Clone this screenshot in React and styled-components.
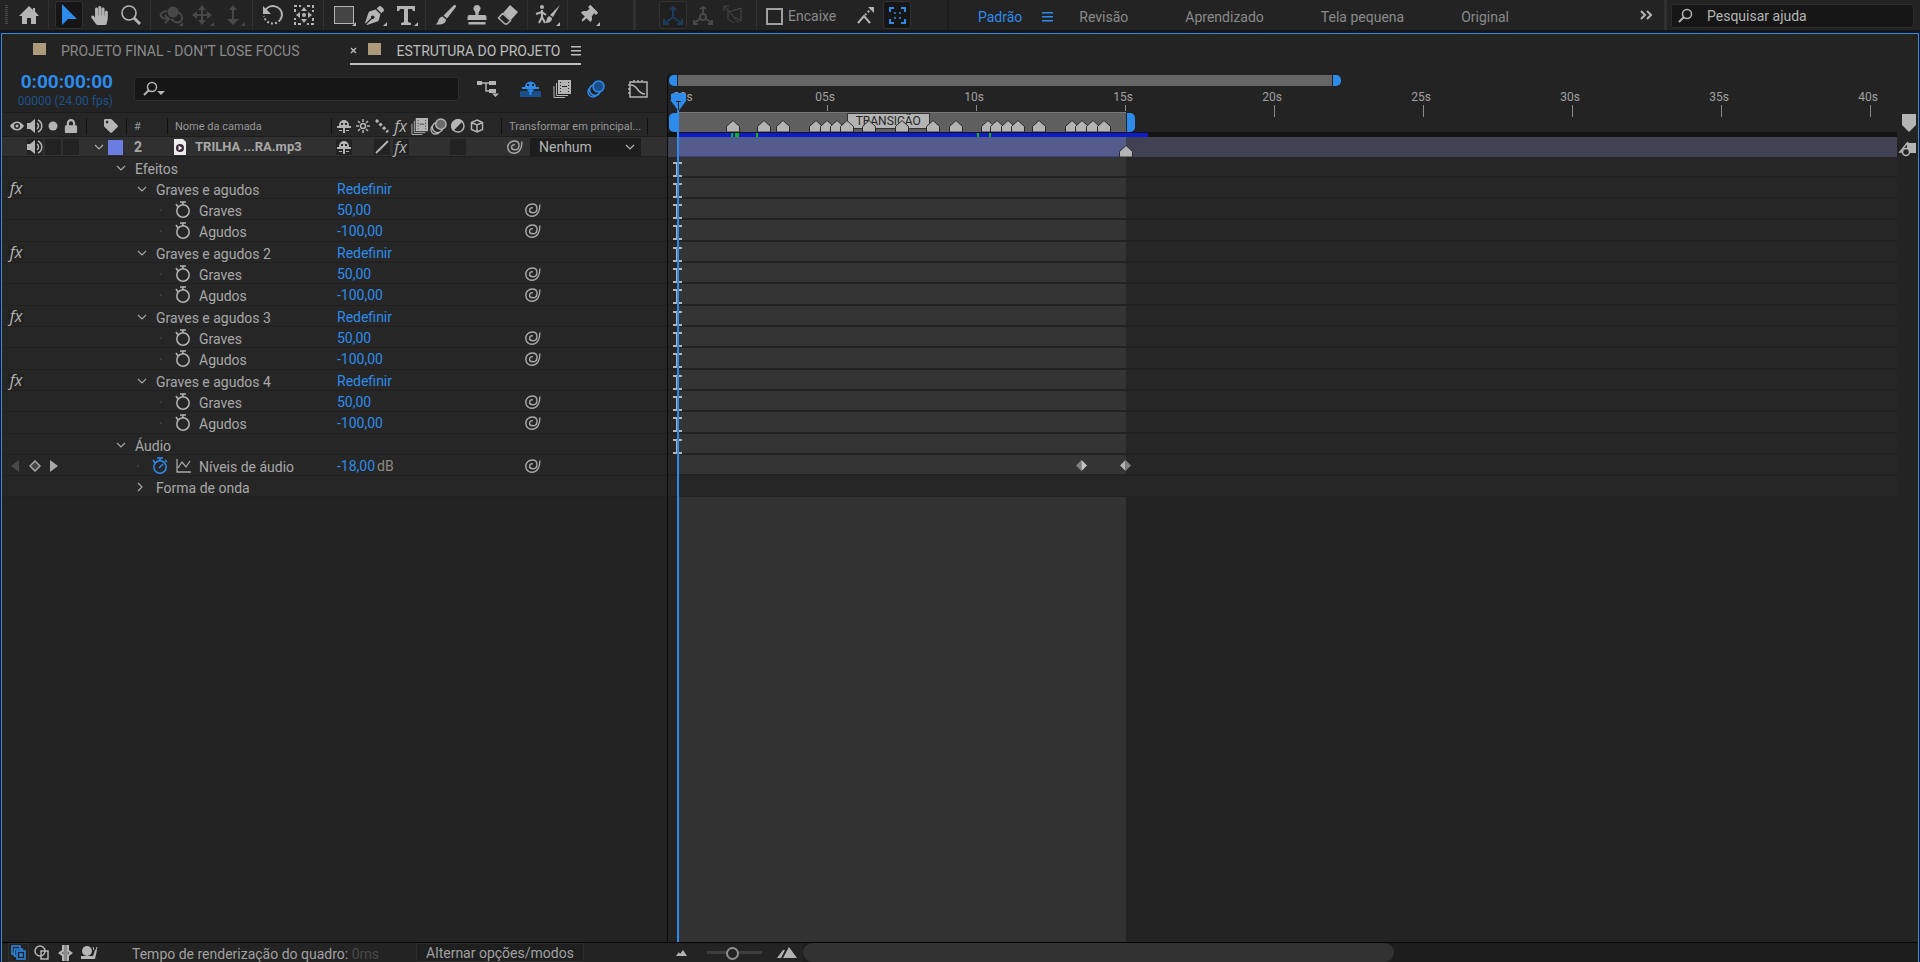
import React from 'react';
import styled, { createGlobalStyle, css } from 'styled-components';
import { FaHandPaper, FaPenNib, FaTag, FaLock, FaThumbtack } from 'react-icons/fa';

const BLUE = '#2d8ceb';
const ICON = '#b4b4b4';
const DIM = '#484848';

/* ---------- time scale ---------- */
const VIEW_SECONDS = 40.9;
const CLIP_END = 15.03;
const at = (t) => `${(t / VIEW_SECONDS) * 100}%`;

const Global = createGlobalStyle`
  * { box-sizing: border-box; }
  body {
    margin: 0;
    background: #161616;
    color: #a8a8a8;
    font-family: Roboto, "Noto Sans", sans-serif;
    font-size: 14px;
    line-height: 20px;
  }
  button, input, select { font: inherit; color: inherit; }
  button { background: none; border: 0; padding: 0; cursor: pointer; }
  svg { display: block; flex: none; }
`;

const Page = styled.div`
  min-height: 100vh;
  display: flex;
  flex-direction: column;
  overflow: hidden;
`;

/* ---------- toolbar ---------- */
const Toolbar = styled.header`
  display: flex;
  align-items: stretch;
  height: 30px;
  background: #232323;
`;
const Grip = styled.div`
  width: 3px;
  margin: 5px 1px 5px 5px;
  background: repeating-linear-gradient(#4a4a4a 0 1px, transparent 1px 2px);
`;
const ToolGroup = styled.div`
  display: flex;
  align-items: center;
  padding: 0 4px;
  border-right: ${(p) => (p.$thick ? '3px' : '1px')} solid #303030;
  min-width: ${(p) => p.$min || 0}px;
`;
const AxisGroup = styled.div`
  display: flex;
  align-items: center;
  width: 121px;
  padding-left: 21px;
  border-right: 1px solid #303030;
`;
const Tool = styled.button`
  position: relative;
  display: grid;
  place-items: center;
  width: ${(p) => p.$w || 31}px;
  height: 28px;
  flex: none;
  color: ${(p) => (p.$dim ? DIM : p.$blue ? BLUE : ICON)};
  ${(p) => p.$active && css`
    background: #161616;
    border: 1px solid #323232;
    border-radius: 3px;
    width: 28px;
    margin: 0 1px 0 2px;
  `}
  ${(p) => p.$off && css`
    background: #202020;
    color: #1b3a5c;
  `}
  ${(p) => p.$more && css`
    &::after {
      content: '';
      position: absolute;
      right: 3px;
      bottom: 3px;
      border: 2px solid transparent;
      border-right-color: currentColor;
      border-bottom-color: currentColor;
    }
  `}
`;
const SnapGroup = styled.div`
  display: flex;
  align-items: center;
  width: 192px;
  flex: none;
  padding-left: 9px;
  border-right: 2px solid #1c1c1c;
`;
const Snap = styled.label`
  display: flex;
  align-items: center;
  gap: 5px;
  margin-right: 14px;
  padding-top: 2px;
  color: #8a8a8a;
  input {
    appearance: none;
    width: 17px;
    height: 17px;
    margin: 0;
    border: 2px solid #a0a0a0;
  }
`;
const Workspaces = styled.nav`
  display: flex;
  flex: 1;
  align-items: center;
  gap: 57px;
  padding: 3px 0 0 29px;
  white-space: nowrap;
`;
const Workspace = styled.a`
  display: flex;
  align-items: center;
  gap: 20px;
  margin-right: ${(p) => (p.$active ? '-31px' : 0)};
  color: ${(p) => (p.$active ? BLUE : '#8a8a8a')};
  text-decoration: none;
`;
const MoreButton = styled.button`
  display: grid;
  place-items: center;
  width: 38px;
  color: ${ICON};
  border-right: 3px solid #303030;
`;
const HelpSearch = styled.label`
  display: flex;
  align-items: center;
  gap: 13px;
  width: 243px;
  margin: 4px 6px 2px 4px;
  padding-left: 6px;
  background: #161616;
  border: 1px solid #2c2c2c;
  border-radius: 3px;
  color: ${ICON};
  input {
    width: 190px;
    padding: 0;
    border: 0;
    background: none;
    outline: 0;
    &::placeholder { color: #b4b4b4; opacity: 1; }
  }
`;

/* ---------- panel ---------- */
const Panel = styled.main`
  display: flex;
  flex-direction: column;
  flex: 1;
  margin: 3px 1px 0;
  border: 1px solid ${BLUE};
  border-bottom: 0;
  background: #232323;
`;
const Tabs = styled.div`
  display: flex;
  align-items: flex-start;
  height: 32px;
  padding-left: 31px;
`;
const Tab = styled.button`
  display: flex;
  align-items: center;
  height: 31px;
  padding-top: 4px;
  margin-right: 50px;
  color: ${(p) => (p.$active ? '#bdbdbd' : '#8a8a8a')};
  border-bottom: 2px solid ${(p) => (p.$active ? '#bdbdbd' : 'transparent')};
`;
const Swatch = styled.span`
  width: 13px;
  height: 12px;
  margin: 0 ${(p) => (p.$wide ? '16px' : '15px')} 4px ${(p) => (p.$wide ? '11px' : '0')};
  background: #ad9a7a;
`;
const TabMenu = styled.span`
  margin-left: 10px;
`;
const Body = styled.div`
  display: flex;
  flex: 1;
`;
const Layers = styled.section`
  width: 665px;
  flex: none;
`;
const Controls = styled.div`
  display: flex;
  align-items: center;
  height: 46px;
`;
const Time = styled.div`
  width: 118px;
  padding: 5px 7px 0 0;
  text-align: right;
  line-height: 19px;
  color: #1c528a;
  font-size: 12px;
  strong {
    display: block;
    font-size: 19px;
    line-height: 20px;
    color: ${BLUE};
  }
`;
const LayerSearch = styled.label`
  display: flex;
  align-items: center;
  width: 325px;
  height: 24px;
  margin-left: 14px;
  padding-left: 8px;
  background: #161616;
  border: 1px solid #2e2e2e;
  border-radius: 3px;
  color: ${ICON};
  input { flex: 1; min-width: 0; border: 0; background: none; outline: 0; }
`;
const CompButtons = styled.div`
  display: flex;
  align-items: center;
  margin-left: 18px;
`;
const CompButton = styled.button`
  margin-left: ${(p) => p.$gap || 0}px;
  color: ${(p) => (p.$blue ? BLUE : ICON)};
`;

const layerColumns = css`
  display: grid;
  grid-template-columns: 85px 40px 41px 164px 170px 146px 1fr;
`;
const Head = styled.div`
  ${layerColumns}
  height: 25px;
  padding: 5px 0 4px;
  border-top: 1px solid #1c1c1c;
  border-bottom: 1px solid #1c1c1c;
  background: #262626;
  color: #969696;
  font-size: 11px;
  line-height: 15px;
`;
const LayerRow = styled.div`
  ${layerColumns}
  height: 20px;
  background: #303030;
  border-bottom: 1px solid #1f1f1f;
  font-weight: 700;
`;
const Cell = styled.div`
  display: flex;
  align-items: center;
  justify-content: ${(p) => (p.$center ? 'center' : 'flex-start')};
  padding-left: ${(p) => p.$pad || 0}px;
  border-right: ${(p) => (p.$line ? '1px solid #101010' : '1px solid transparent')};
  white-space: nowrap;
`;
const Slot = styled.span`
  display: grid;
  place-items: center;
  width: ${(p) => p.$w || 18}px;
  height: 16px;
  color: ${ICON};
  background: linear-gradient(#222, #222) center / 16px 16px no-repeat;
  ${(p) => p.$bare && css`background: none;`}
`;
const ColorLabel = styled.span`
  width: 15px;
  height: 15px;
  margin-left: 4px;
  background: #6a7ee0;
`;
const LayerName = styled.span`
  margin-left: 9px;
  font-size: 13px;
`;
const Parent = styled.label`
  display: flex;
  align-items: center;
  position: relative;
  margin-left: 7px;
  font-weight: 400;
  color: #b4b4b4;
  select {
    appearance: none;
    width: 111px;
    height: 18px;
    padding: 0 9px;
    border: 0;
    background: #1d1d1d;
    line-height: 18px;
  }
  svg { position: absolute; right: 6px; }
`;
const PropRow = styled.div`
  display: grid;
  grid-template-columns: 85px 245px 170px 146px 1fr;
  height: ${(p) => p.$h}px;
  background: #262626;
  border-bottom: 1px solid #202020;
  line-height: 18px;
`;
const PropName = styled.div`
  display: flex;
  align-items: center;
  gap: ${(p) => p.$gap}px;
  padding-left: ${(p) => p.$pad}px;
  white-space: nowrap;
`;
const NameText = styled.span`
  padding-top: 3px;
`;
const Dot = styled.i`
  width: 2px;
  height: 2px;
  margin-right: 5px;
  background: #3c3c3c;
`;
const Watch = styled.button`
  color: ${(p) => (p.$on ? BLUE : ICON)};
`;
const Value = styled.div`
  display: flex;
  align-items: center;
  gap: 2px;
  padding-left: 5px;
  color: #8f8a80;
  button { color: ${BLUE}; }
`;
const KeySlot = styled.div`
  display: flex;
  align-items: center;
  gap: 9px;
  padding-left: ${(p) => (p.$keys ? '9px' : '6px')};
`;

/* ---------- timeline ---------- */
const Timeline = styled.section`
  position: relative;
  flex: 1;
  min-width: 0;
  display: flex;
  flex-direction: column;
  margin-top: 7px;
  overflow: hidden;
  border-left: 1px solid #0a0a0a;
  border-radius: 6px 6px 0 0;
`;
const Track = styled.div`
  height: ${(p) => p.$h}px;
  padding: ${(p) => p.$top || 0}px 0 0 10px;
  background: ${(p) => p.$bg || 'transparent'};
`;
const Scale = styled.div`
  position: relative;
  height: 100%;
`;
const rounded = css`
  &::before, &::after {
    content: '';
    position: absolute;
    top: 0;
    bottom: 0;
    width: 8px;
    background: ${BLUE};
  }
  &::before { left: -9px; border-radius: 5px 0 0 5px; }
  &::after { right: -9px; border-radius: 0 5px 5px 0; }
`;
const NavBar = styled.div`
  position: relative;
  height: 11px;
  background: #666;
  ${rounded}
`;
const WorkBar = styled.div`
  position: relative;
  height: 20px;
  background: #5f5f5f;
  border-top: 1px solid #787878;
  ${rounded}
`;
const Tick = styled.div`
  position: absolute;
  top: 0;
  width: 60px;
  margin-left: -32px;
  text-align: center;
  font-size: 12px;
  line-height: 20px;
  color: #a0a0a0;
  z-index: 1;
  &::after {
    content: '';
    position: absolute;
    top: 18px;
    left: 32px;
    width: 1px;
    height: ${(p) => (p.$short ? '6px' : '12px')};
    background: #8a8a8a;
  }
  &:first-child {
    margin-left: -8px;
    text-align: left;
    &::after { display: none; }
  }
`;
const MarkerBox = styled.span`
  position: absolute;
  bottom: 0;
  margin-left: -7px;
`;
const MarkerLabel = styled.span`
  position: absolute;
  top: 1px;
  padding: 0 8px;
  background: #b4b4b4;
  border: 1px solid #333;
  color: #262626;
  font-size: 12px;
  line-height: 14px;
`;
const Cached = styled.span`
  position: absolute;
  top: 1px;
  height: 4px;
  min-width: 2px;
  background: ${(p) => (p.$green ? '#12b41e' : '#0d1cc8')};
`;
const Clip = styled.div`
  position: absolute;
  inset: 0 auto 0 0;
  background: #535c8c;
  border-bottom: 1px solid #3a4480;
`;
const Lane = styled.div`
  height: ${(p) => p.$h}px;
  padding-left: 10px;
  background: #262626;
  border-bottom: ${(p) => (p.$empty ? 1 : 2)}px solid #212121;
`;
const LaneFill = styled.div`
  height: 100%;
  background: ${(p) => (p.$empty ? 'transparent' : '#343434')};
`;
const Beam = styled.span`
  position: absolute;
  left: -5px;
  top: 5px;
  color: ${ICON};
`;
const Rest = styled.div`
  flex: 1;
  padding-left: 10px;
  display: flex;
`;
const RestFill = styled.div`
  background: #323232;
`;
const Key = styled.span`
  position: absolute;
  top: 5px;
  margin-left: -6px;
`;
const Playhead = styled.div`
  position: absolute;
  top: 20px;
  bottom: 0;
  left: 3px;
  width: 15px;
  pointer-events: none;
  z-index: 2;
  &::after {
    content: '';
    position: absolute;
    top: 17px;
    bottom: 0;
    left: 6px;
    width: 2px;
    background: ${BLUE};
  }
`;
const Gutter = styled.aside`
  width: 21px;
  flex: none;
  padding-top: 48px;
  color: ${ICON};
  svg { margin: 0 auto 9px 5px; }
  svg + svg { margin-left: 1px; }
`;

/* ---------- footer ---------- */
const Footer = styled.footer`
  display: flex;
  height: 20px;
  border-top: 1px solid #050505;
  color: #a0a0a0;
`;
const FootLeft = styled.div`
  display: flex;
  align-items: center;
  width: 666px;
  flex: none;
  padding-left: 6px;
  white-space: nowrap;
`;
const FootIcon = styled.button`
  display: grid;
  place-items: center;
  width: ${(p) => (p.$active ? 21 : 24)}px;
  height: 19px;
  color: ${(p) => (p.$active ? BLUE : ICON)};
  border: ${(p) => (p.$active ? '1px solid #303030' : 0)};
`;
const RenderTime = styled.span`
  width: 284px;
  margin-left: 31px;
  padding-top: 2px;
  em { font-style: normal; color: #4a4a4a; }
`;
const ModeButton = styled.button`
  width: 168px;
  height: 19px;
  border: 1px solid #2c2c2c;
  background: #1f1f1f;
  line-height: 19px;
`;
const Zoomer = styled.label`
  display: flex;
  align-items: center;
  gap: 20px;
  width: 135px;
  flex: none;
  padding-left: 8px;
  color: ${ICON};
  input {
    appearance: none;
    width: 55px;
    height: 16px;
    margin: 0;
    background: linear-gradient(#3e3e3e, #3e3e3e) center / 100% 3px no-repeat;
    &::-webkit-slider-thumb {
      appearance: none;
      width: 13px;
      height: 13px;
      margin-top: 1px;
      border: 2px solid #8f8f8f;
      border-radius: 50%;
      background: #232323;
    }
  }
  svg:last-child { margin-left: -5px; }
`;
const Scroll = styled.div`
  flex: 1;
  background: #1d1d1d;
`;
const Thumb = styled.div`
  width: 53%;
  height: 19px;
  border-radius: 10px;
  background: #323232;
`;

/* ---------- icons ---------- */
const Svg = ({ w = 16, h = w, box = `0 0 ${w} ${h}`, sw = 0, children }) => (
  <svg width={w} height={h} viewBox={box} fill={sw ? 'none' : 'currentColor'} stroke={sw ? 'currentColor' : 'none'} strokeWidth={sw || undefined} aria-hidden="true">
    {children}
  </svg>
);
const Home = () => <Svg w={22} h={20}><path d="M11 1 1 11h3v8h5v-6h4v6h5v-8h3L17 6.500V3h-2v2z" /></Svg>;
const Arrow = () => <Svg w={18} h={22}><path d="M2 0v21l6-6h9z" /></Svg>;
const Magnifier = () => <Svg w={22} sw={1.600}><circle cx="9" cy="9" r="7" /><path d="m14 14 6 6" strokeWidth="3" /></Svg>;
const Orbit = () => <Svg w={24} h={22}><circle cx="14" cy="8" r="5.500" /><path d="M8 7C1 8 0 12 4 14l5 1m-3-4 4 4-4 4M19 8c5 3 5 8 2 10-3 1-6 0-9-3" fill="none" stroke="currentColor" strokeWidth="2" /></Svg>;
const Move = () => <Svg w={20}><path d="m10 0 4 5h-3v4h4V6l5 4-5 4v-3h-4v4h3l-4 5-4-5h3v-4H5v3l-5-4 5-4v3h4V5H6z" /></Svg>;
const Dolly = () => <Svg w={16} h={20}><path d="m8 0 4 5H9v9h5l-6 6-6-6h5V5H4z" /></Svg>;
const Rotate = () => <Svg w={22} sw={2}><path d="M3 7a9 9 0 0 1 17 4 9 9 0 0 1-2 5" /><path d="M18 16A9 9 0 0 1 2 12" strokeDasharray="2 2" /><path d="M1 2v8h8z" fill="currentColor" stroke="none" /></Svg>;
const Anchor = () => (
  <Svg w={22}>
    <path d="M2 8V2h6M14 2h6v6M20 14v6h-6M8 20H2v-6" fill="none" stroke="currentColor" strokeWidth="2" strokeDasharray="3 2" />
    <circle cx="11" cy="11" r="2" /><path d="m11 3 3 4H8zM11 19l3-4H8zM3 11l4-3v6zM19 11l-4-3v6z" />
  </Svg>
);
const Rect = () => <Svg w={20} h={18}><path d="M0 0h20v18H0z" /><path d="M1 1h18v16H1z" fill="#444" /></Svg>;
const TypeTool = () => <Svg w={18} h={19}><path d="M0 0h18v5h-2l-1-2h-4v13l3 1v2H4v-2l3-1V3H3L2 5H0z" /></Svg>;
const Brush = () => <Svg w={21} h={20}><path d="M20.500 0c.8.8.4 1.800 0 2.500L12 13.500 8.500 10.500 18 1c.8-.8 1.800-1.500 2.500-1zM7.500 11.500l3.500 3c0 4-4 5.500-10.500 5 3.500-1.500 2-7 7-8z" /></Svg>;
const Stamp = () => <Svg w={20} h={20}><path d="M10 0a3.500 3.500 0 0 1 2.500 6c-.8 1-1 2-1 4h6a2 2 0 0 1 2 2v3H.5v-3a2 2 0 0 1 2-2h6c0-2-.2-3-1-4A3.500 3.500 0 0 1 10 0zM1.500 17h17v2.500h-17z" /></Svg>;
const Eraser = () => <Svg w={22} h={20}><path d="M13 0 6 8l8 7 7-8z" /><path d="m5.500 8.500 8 7-3.500 3.500H8L1.500 13z" fill="none" stroke="currentColor" strokeWidth="1.500" strokeLinejoin="round" /></Svg>;
const Roto = () => (
  <Svg w={25} h={20}>
    <circle cx="7" cy="2" r="2" />
    <path d="M7 5v7l-3 6M7 12l3 6M7 7 1 9M7 7l4 3" fill="none" stroke="currentColor" strokeWidth="2" />
    <path d="M25 0 18 12l-3-2zM14 11l3 2c0 4-3 5-7 5 2-1 1-5 4-7z" />
  </Svg>
);
const Pin = styled(FaThumbtack)`transform: rotate(45deg);`;
const Axis = () => <Svg w={22} h={20} sw={2}><path d="M11 12V3M11 12l-8 6M11 12l8 6M8 5l3-3 3 3M2 14v5h5M20 14v5h-5" /></Svg>;
const AxisWorld = () => <Svg w={22} h={20} sw={2}><circle cx="11" cy="12" r="3" /><path d="M11 9V2M8 14l-6 4M14 14l6 4M8 4l3-2 3 2M2 15v4h4M20 15v4h-4" /></Svg>;
const AxisView = () => <Svg w={20} h={20} sw={1}><path d="M5 4v10l6 4M6 7l12-4v13l-6-4M2 2l14 16M1 6V1h5" /></Svg>;
const SnapLine = () => <Svg w={18} h={18} sw={2}><path d="m1 17 6-7 6 7" /><path d="m8 9 7-7" strokeDasharray="2 2" /><path d="M11 1h6v6z" fill="currentColor" stroke="none" /></Svg>;
const SnapBox = () => <Svg w={17} h={17} sw={2}><path d="M1 5V1h4M12 1h4v4M16 12v4h-4M5 16H1v-4" /><path d="M5 6h2M10 6h2M5 11h2M10 11h2" strokeWidth="1.500" /></Svg>;
const Burger = ({ w = 11 }) => <Svg w={w} h={10}><path d={`M0 0h${w}v1.500H0zM0 4h${w}v1.500H0zM0 8h${w}v1.500H0z`} /></Svg>;
const Chevrons = () => <Svg w={13} h={10} sw={2}><path d="m1 1 4 4-4 4M7 1l4 4-4 4" /></Svg>;
const SearchIcon = ({ caret }) => <Svg w={caret ? 22 : 16} h={16} sw={2}><circle cx="9" cy="6" r="4.500" strokeWidth="1.500" /><path d="m6 9-5 5" />{caret && <path d="M14 10h8l-4 4z" fill="currentColor" stroke="none" />}</Svg>;
const Flow = () => <Svg w={22} h={18}><path d="M0 1h5v4H0zM12 1h7v4h-7zM12 9h7v4h-7zM15 13.500h7L18.500 17z" /><path d="M5 3h7M9 3v8h3" fill="none" stroke="currentColor" strokeWidth="1.500" /></Svg>;
const Shy = () => (
  <Svg w={16}>
    <path d="M3 7a5 5 0 0 1 10 0v1h2v2H9v5H7v-5H1V8h2zM5 5v2h2V5zM9 5v2h2V5z" fillRule="evenodd" />
    <path d="M3 12h3v1H3zM10 12h3v1h-3z" />
  </Svg>
);
const ShyMaster = () => (
  <Svg w={21} h={16}>
    <path d="M0 10h21v6H0z" fill="#19508c" />
    <path d="M5 6a5.500 5.500 0 0 1 11 0h3v2H2V6zM7 3v2h2V3zM12 3v2h2V3zM9.500 8h2v6h-2z" fillRule="evenodd" />
    <path d="M6.500 8.500h8l-2 2h-4z" />
  </Svg>
);
const Frames = ({ s = 18 }) => (
  <Svg w={s} box="0 0 18 18">
    <path d="M5 0h13v14H5zM7 2v1h1V2zM7 5v1h1V5zM7 8v1h1V8zM7 11v1h1v-1zM15 2v1h1V2zM15 5v1h1V5zM15 8v1h1V8zM15 11v1h1v-1zM9 6v1h5V6z" fillRule="evenodd" />
    <path d="M3.500 3v12.500H15M1 6v11.500h11" fill="none" stroke="currentColor" />
  </Svg>
);
const Blur = ({ s = 18, fill = '#6a6a6a' }) => (
  <Svg w={s} box="0 0 18 18" sw={1.500}>
    <circle cx="6" cy="12" r="5" /><circle cx="8" cy="10" r="5.500" fill="#232323" /><circle cx="11.500" cy="6.500" r="5.500" fill={fill} />
  </Svg>
);
const Graph = () => <Svg w={21} h={20} sw={1.500}><path d="M3 3h17v15H3zM1 6h2M1 10h2M1 14h2M7 1v2M11 1v2M15 1v2M4 6c7 0 6 9 14 9" /></Svg>;
const Eye = () => <Svg w={14} h={10}><path d="M0 5C4-1 10-1 14 5 10 11 4 11 0 5zM7 2a3 3 0 1 0 0 6 3 3 0 0 0 0-6z" fillRule="evenodd" /><circle cx="7" cy="5" r="1.500" /></Svg>;
const Speaker = () => <Svg w={16} h={16}><path d="M0 5h3l5-4v14l-5-4H0z" /><path d="M10 5c2 1.500 2 4.500 0 6M11 2c5 2.500 5 9.500 0 12" fill="none" stroke="currentColor" strokeWidth="1.500" /></Svg>;
const Solo = () => <Svg w={10}><circle cx="5" cy="5" r="4.500" /></Svg>;
const Sun = () => <Svg w={14} sw={1.500}><circle cx="7" cy="7" r="2.500" /><path d="M7 0v3M7 11v3M0 7h3M11 7h3M2 2l2 2M10 10l2 2M12 2l-2 2M4 10l-2 2" /></Svg>;
const Quality = () => <Svg w={14} sw={3}><path d="m1 1 12 12" strokeDasharray="3 2" /></Svg>;
const Slash = () => <Svg w={14} sw={2}><path d="M1 13 13 1" /></Svg>;
const Adjust = () => <Svg w={14}><path d="M12 2A7 7 0 1 0 2 12z" /><circle cx="7" cy="7" r="6" fill="none" stroke="currentColor" strokeWidth="1.500" /></Svg>;
const Cube = () => <Svg w={14} sw={1.500}><path d="m7 1 5.500 2.500v7L7 13l-5.500-2.500v-7zM1.500 3.500 7 6l5.500-2.500M7 6v7" /></Svg>;
const Spiral = () => <Svg w={16} h={14} sw={1.400}><path d="M14.800 1.500C15.300 8 12 13.200 7 13.200 3 13.200.8 10.500.8 7.300.8 3.600 3.700 1 7.300 1c3 0 4.700 2 4.700 4.400 0 2.700-2 4.300-4.300 4.300-1.900 0-3.100-1-3.100-2.500 0-1.600 1.200-2.700 3.200-2.500" /></Svg>;
const Down = () => <Svg w={10} h={6} sw={1.200}><path d="m1 1 4 4 4-4" /></Svg>;
const Right = () => <Svg w={10} h={10} sw={1.200}><path d="m1 1 4 4-4 4" /></Svg>;
const Stopwatch = ({ on }) => <Svg w={16} h={17} sw={1.500}><circle cx="8" cy="10" r="6.200" /><path d="M5 1h6M8 1v3M1 3l2 3" />{on && <path d="m7 11 4-4M13 3l2 2" />}</Svg>;
const MiniGraph = () => <Svg w={15} h={14} sw={1.300}><path d="M1 0v13h14M2 9l4-6 4 5 4-6" /></Svg>;
const FileIcon = () => <Svg w={12} h={16}><path d="M0 0h9l3 3v13H0z" fill="#eee" /><circle cx="6" cy="9" r="4" fill="#3b2a36" /><path d="m4.500 6.500 4 2.500-4 2.500z" fill="#eee" /></Svg>;
const MarkerIcon = () => <Svg w={14} h={12}><path d="M7 .5 13.500 6.500V12H.5V6.500z" fill="#b4b4b4" stroke="#2b2b2b" /></Svg>;
const BeamIcon = () => <Svg w={9} h={15}><path d="M0 0h9v2H6v11h3v2H0v-2h3V2H0z" /></Svg>;
const KeyIcon = ({ flip }) => <Svg w={11} h={11}><path d="M5.500 0 0 5.500 5.500 11z" fill={flip ? '#b4b4b4' : '#808080'} /><path d="M5.500 0 11 5.500 5.500 11z" fill={flip ? '#808080' : '#c4c4c4'} /></Svg>;
const Fx = styled.i.attrs({ children: 'fx' })`
  font-family: "Open Sans", "Noto Sans", sans-serif;
  font-size: 16px;
  font-weight: 400;
  line-height: 15px;
`;
const KeyNav = () => (
  <>
    <Svg w={9} h={12}><path d="M8 0v12L0 6z" fill="#484848" /></Svg>
    <Svg w={12} sw={1.500}><path d="m6 1 5 5-5 5-5-5z" fill="#444" /></Svg>
    <Svg w={8} h={12}><path d="M0 0v12l8-6z" /></Svg>
  </>
);

/* ---------- data ---------- */
const effects = ['Graves e agudos', 'Graves e agudos 2', 'Graves e agudos 3', 'Graves e agudos 4'];
const rows = [
  { kind: 'group', name: 'Efeitos', pad: 29, h: 21 },
  ...effects.flatMap((name) => [
    { kind: 'effect', name, pad: 50, h: 21 },
    { kind: 'param', name: 'Graves', value: '50,00', pad: 73, h: 21 },
    { kind: 'param', name: 'Agudos', value: '-100,00', pad: 73, h: 22 },
  ]),
  { kind: 'group', name: 'Áudio', pad: 29, h: 21 },
  { kind: 'levels', name: 'Níveis de áudio', value: '-18,00', unit: 'dB', pad: 50, h: 21 },
  { kind: 'closed', name: 'Forma de onda', pad: 50, h: 21 },
];
const markers = [1.85, 2.88, 3.53, 4.63, 5, 5.33, 5.67, 6.4, 7.52, 8.56, 9.33, 10.4, 10.7, 11.07, 11.41, 12.11, 13.22, 13.56, 13.93, 14.3];
const cached = [[1.78, 0.07], [1.92, 0.14], [2.62, 0.07], [10.03, 0.07], [10.44, 0.07]];
const ticks = [':00s', '05s', '10s', '15s', '20s', '25s', '30s', '35s', '40s'];
const switches = [Shy, Sun, Quality, Fx, Frames, Blur, Adjust, Cube];

const PropertyRow = ({ row }) => {
  const levels = row.kind === 'levels';
  const animated = row.kind === 'param' || levels;
  return (
    <PropRow $h={row.h}>
      <KeySlot $keys={levels}>
        {row.kind === 'effect' && <Slot $w={16}><Fx /></Slot>}
        {levels && <KeyNav />}
      </KeySlot>
      <PropName $pad={row.pad} $gap={animated ? 8 : 9}>
        {animated ? <Dot /> : row.kind === 'closed' ? <Right /> : <Down />}
        {animated && <Watch $on={levels} aria-label={`Animar ${row.name}`}><Stopwatch on={levels} /></Watch>}
        {levels && <MiniGraph />}
        <NameText>{row.name}</NameText>
      </PropName>
      <Value>
        {row.kind === 'effect' && <button>Redefinir</button>}
        {row.value && <button>{row.value}</button>}
        {row.unit}
      </Value>
      <Cell $pad={23}>{animated && <Spiral />}</Cell>
    </PropRow>
  );
};

export default function App() {
  return (
    <Page>
      <Global />
      <Toolbar>
        <Grip />
        <ToolGroup><Tool aria-label="Início"><Home /></Tool></ToolGroup>
        <ToolGroup>
          <Tool $active $blue aria-label="Seleção"><Arrow /></Tool>
          <Tool aria-label="Mão"><FaHandPaper size={19} /></Tool>
          <Tool aria-label="Zoom"><Magnifier /></Tool>
        </ToolGroup>
        <ToolGroup>
          <Tool $dim $more aria-label="Orbitar"><Orbit /></Tool>
          <Tool $dim $more aria-label="Panorâmica"><Move /></Tool>
          <Tool $dim $more aria-label="Aproximar"><Dolly /></Tool>
        </ToolGroup>
        <ToolGroup>
          <Tool aria-label="Rotação"><Rotate /></Tool>
          <Tool aria-label="Ponto de ancoragem"><Anchor /></Tool>
        </ToolGroup>
        <ToolGroup>
          <Tool $more aria-label="Retângulo"><Rect /></Tool>
          <Tool $more aria-label="Caneta"><FaPenNib size={19} /></Tool>
          <Tool $more aria-label="Texto"><TypeTool /></Tool>
        </ToolGroup>
        <ToolGroup>
          <Tool aria-label="Pincel"><Brush /></Tool>
          <Tool aria-label="Carimbo"><Stamp /></Tool>
          <Tool aria-label="Borracha"><Eraser /></Tool>
        </ToolGroup>
        <ToolGroup><Tool $more aria-label="Pincel de rotoscopia"><Roto /></Tool></ToolGroup>
        <ToolGroup $thick $min={68}><Tool $more aria-label="Fantoche"><Pin size={18} /></Tool></ToolGroup>
        <AxisGroup>
          <Tool $active $off aria-label="Eixo local"><Axis /></Tool>
          <Tool $dim $w={30} aria-label="Eixo global"><AxisWorld /></Tool>
          <Tool $dim $w={30} aria-label="Eixo de exibição"><AxisView /></Tool>
        </AxisGroup>
        <SnapGroup>
          <Snap><input type="checkbox" />Encaixe</Snap>
          <Tool aria-label="Encaixar bordas"><SnapLine /></Tool>
          <Tool $active $blue aria-label="Encaixar recursos"><SnapBox /></Tool>
        </SnapGroup>
        <Workspaces>
          <Workspace href="#padrao" $active>Padrão <Burger w={11} /></Workspace>
          <Workspace href="#revisao">Revisão</Workspace>
          <Workspace href="#aprendizado">Aprendizado</Workspace>
          <Workspace href="#tela-pequena">Tela pequena</Workspace>
          <Workspace href="#original">Original</Workspace>
        </Workspaces>
        <MoreButton aria-label="Mais"><Chevrons /></MoreButton>
        <HelpSearch><SearchIcon /><input type="search" placeholder="Pesquisar ajuda" aria-label="Pesquisar ajuda" /></HelpSearch>
      </Toolbar>

      <Panel>
        <Tabs>
          <Tab><Swatch />PROJETO FINAL - DON"T LOSE FOCUS</Tab>
          <Tab $active>
            <Svg w={7} sw={1.300}><path d="m1 1 5 5M6 1 1 6" /></Svg>
            <Swatch $wide />ESTRUTURA DO PROJETO<TabMenu><Burger w={10} /></TabMenu>
          </Tab>
        </Tabs>
        <Body>
          <Layers>
            <Controls>
              <Time><strong>0:00:00:00</strong>00000 (24.00 fps)</Time>
              <LayerSearch><SearchIcon caret /><input type="text" aria-label="Pesquisar camadas" /></LayerSearch>
              <CompButtons>
                <CompButton aria-label="Minifluxograma"><Flow /></CompButton>
                <CompButton $gap={21} $blue aria-label="Tímido"><ShyMaster /></CompButton>
                <CompButton $gap={12} aria-label="Mesclagem de quadros"><Frames /></CompButton>
                <CompButton $gap={16} $blue aria-label="Desfoque de movimento"><Blur fill="#19508c" /></CompButton>
                <CompButton $gap={22} aria-label="Editor de gráfico"><Graph /></CompButton>
              </CompButtons>
            </Controls>
            <Head>
              <Cell $pad={6} $line><Slot $bare><Eye /></Slot><Slot $bare><Speaker /></Slot><Slot $bare><Solo /></Slot><Slot $bare><FaLock size={14} /></Slot></Cell>
              <Cell $pad={8} $line $center><Slot $bare><FaTag size={14} /></Slot></Cell>
              <Cell $pad={7} $line>#</Cell>
              <Cell $pad={7} $line>Nome da camada</Cell>
              <Cell $pad={2} $line>
                {switches.map((Icon, i) => <Slot key={i} $w={19} $bare><Icon s={17} /></Slot>)}
              </Cell>
              <Cell $pad={7} $line>Transformar em principal...</Cell>
            </Head>
            <LayerRow>
              <Cell $pad={6}><Slot $bare /><Slot><Speaker /></Slot><Slot /><Slot /></Cell>
              <Cell $pad={7}><Down /><ColorLabel /></Cell>
              <Cell $pad={7}>2</Cell>
              <Cell $pad={6}><FileIcon /><LayerName>TRILHA ...RA.mp3</LayerName></Cell>
              <Cell $pad={2}>
                <Slot $w={19}><Shy /></Slot><Slot $w={19} $bare /><Slot $w={19}><Slash /></Slot><Slot $w={19}><Fx /></Slot>
                <Slot $w={19} $bare /><Slot $w={19} $bare /><Slot $w={19} />
              </Cell>
              <Cell $pad={5}>
                <Spiral />
                <Parent><select aria-label="Principal" defaultValue="Nenhum"><option>Nenhum</option></select><Down /></Parent>
              </Cell>
            </LayerRow>
            {rows.map((row, i) => <PropertyRow key={i} row={row} />)}
          </Layers>

          <Timeline>
            <Track $h={14} $top={2}><Scale><NavBar style={{ width: at(21.95) }} /></Scale></Track>
            <Track $h={25}>
              <Scale>{ticks.map((t, i) => <Tick key={t} $short={i < 4} style={{ left: at(i * 5) }}>{t}</Tick>)}</Scale>
            </Track>
            <Track $h={20}>
              <Scale>
                <WorkBar style={{ width: at(CLIP_END) }} />
                <MarkerLabel style={{ left: at(5.66) }}>TRANSIÇÃO</MarkerLabel>
                {markers.map((t) => <MarkerBox key={t} style={{ left: at(t) }}><MarkerIcon /></MarkerBox>)}
              </Scale>
            </Track>
            <Track $h={5} $bg="#141414">
              <Scale>
                <Cached style={{ left: 0, width: at(15.77) }} />
                {cached.map(([t, w]) => <Cached key={t} $green style={{ left: at(t), width: at(w) }} />)}
              </Scale>
            </Track>
            <Track $h={20} $bg="#404253">
              <Scale>
                <Clip style={{ width: at(CLIP_END) }} />
                <MarkerBox style={{ left: at(CLIP_END) }}><MarkerIcon /></MarkerBox>
              </Scale>
            </Track>
            {rows.map((row, i) => (
              <Lane key={i} $h={row.h} $empty={row.kind === 'closed'}>
                <Scale>
                  <LaneFill $empty={row.kind === 'closed'} style={{ width: at(CLIP_END) }} />
                  {row.kind !== 'closed' && row.kind !== 'levels' && <Beam><BeamIcon /></Beam>}
                  {row.kind === 'levels' && <><Key style={{ left: at(13.57) }}><KeyIcon /></Key><Key style={{ left: at(CLIP_END) }}><KeyIcon flip /></Key></>}
                </Scale>
              </Lane>
            ))}
            <Rest><RestFill style={{ width: at(CLIP_END) }} /></Rest>
            <Playhead><Svg w={15} h={18}><path d="M0 2 2 0h11l2 2v6L7.500 18 0 8z" fill={BLUE} /><path d="M5 8.500h5M7.500 8v10" stroke="#232323" /></Svg></Playhead>
          </Timeline>
          <Gutter>
            <Svg w={14} h={18}><path d="M0 0h14v11l-7 7-7-7z" /></Svg>
            <Svg w={18} h={16}><path d="M9 2h9v10H9z" /><path d="M10 1 2 11h4" fill="none" stroke="currentColor" strokeWidth="1.500" /><circle cx="8" cy="11" r="3.500" fill="#232323" stroke="currentColor" strokeWidth="1.500" /></Svg>
          </Gutter>
        </Body>
        <Footer>
          <FootLeft>
            <FootIcon $active aria-label="Opções de camada"><Svg w={15} sw={1.500}><path d="M3 9H1V1h8v2M5 11H3.500V4H11v2" /><path d="M6 6h8v8H6zM9 9h2v2H9z" /></Svg></FootIcon>
            <FootIcon aria-label="Controles de transferência"><Svg w={15} sw={1.500}><circle cx="6" cy="6" r="5" /><path d="M7 6h7v8H7z" /></Svg></FootIcon>
            <FootIcon aria-label="Entrada e saída"><Svg w={15} h={16}><path d="M5 0h5v16H5z" fill="#8a8a8a" /><path d="M4 0v5L0 8l4 3v5h2v-6L4 8l2-2V0zM11 0v5l4 3-4 3v5H9v-6l2-2-2-2V0z" /></Svg></FootIcon>
            <FootIcon aria-label="Tempo de renderização"><Svg w={17} h={13}><circle cx="6" cy="5" r="5" /><path d="M0 10h12l2-6h2l-2 9H0z" /><path d="m12 1 1 3M16 1l-1 3" stroke="currentColor" /></Svg></FootIcon>
            <RenderTime>Tempo de renderização do quadro: <em>0ms</em></RenderTime>
            <ModeButton>Alternar opções/modos</ModeButton>
          </FootLeft>
          <Zoomer>
            <Svg w={11} h={6}><path d="m0 6 3-4 1 2 3-4 4 6z" /></Svg>
            <input type="range" aria-label="Zoom da linha do tempo" defaultValue={46} />
            <Svg w={20} h={11}><path d="m0 11 6-8h2l-4 8zM6 11l6-11 8 11z" /></Svg>
          </Zoomer>
          <Scroll><Thumb /></Scroll>
        </Footer>
      </Panel>
    </Page>
  );
}
